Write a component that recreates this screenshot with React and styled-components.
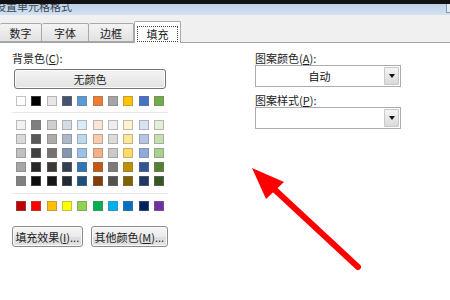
import React from 'react'
import styled, { createGlobalStyle } from 'styled-components'

/* Excel "设置单元格格式" dialog, 填充 tab, with a red pointer arrow on top */

const GlobalStyle = createGlobalStyle`
  html, body {
    margin: 0;
    padding: 0;
    background: #ffffff;
  }
  body {
    font-family: "Noto Sans CJK SC", "Liberation Sans", sans-serif;
    color: #222;
  }
`

const themeRow = ['#FFFFFF', '#000000', '#E7E6E6', '#44546A', '#5B9BD5', '#ED7D31', '#A5A5A5', '#FFC000', '#4472C4', '#70AD47']

const tintRows = [
  ['#F2F2F2', '#7F7F7F', '#D0CECE', '#D6DCE4', '#DDEBF7', '#FCE4D6', '#EDEDED', '#FFF2CC', '#D9E1F2', '#E2EFDA'],
  ['#D9D9D9', '#595959', '#AEABAB', '#ADB9CA', '#BDD7EE', '#F8CBAD', '#DBDBDB', '#FFE699', '#B4C6E7', '#C6E0B4'],
  ['#BFBFBF', '#404040', '#757171', '#8497B0', '#9BC2E6', '#F4B084', '#C9C9C9', '#FFD966', '#8EA9DB', '#A9D08E'],
  ['#A6A6A6', '#262626', '#3B3838', '#333F4F', '#2F75B5', '#C65911', '#7B7B7B', '#BF8F00', '#305496', '#548235'],
  ['#808080', '#0D0D0D', '#171616', '#222B35', '#1F4E78', '#833C0C', '#525252', '#806000', '#203764', '#375623'],
]

const standardRow = ['#C00000', '#FF0000', '#FFC000', '#FFFF00', '#92D050', '#00B050', '#00B0F0', '#0070C0', '#002060', '#7030A0']

const tabs = [
  { label: '数字', width: 42 },
  { label: '字体', width: 47 },
  { label: '边框', width: 45 },
  { label: '填充', width: 47, active: true },
]

const Frame = styled.div`
  position: relative;
  width: 450px;
  height: 300px;
  overflow: hidden;
  background: #ffffff;
  display: flex;
  flex-direction: column;
`

const TopEdge = styled.div`
  height: 4px;
  background: #111111;
`

const TitleBar = styled.div`
  height: 11px;
  overflow: hidden;
  display: flex;
  justify-content: space-between;
  background: linear-gradient(#bcd1e9, #d4e2f1);
`

const TitleText = styled.div`
  font-size: 11px;
  line-height: 11px;
  margin-top: -3px;
  margin-left: -5px;
  color: #3a4450;
  white-space: nowrap;
`

const CloseEdge = styled.div`
  width: 3px;
  height: 8px;
  border-left: 1px solid #8a96a4;
  border-bottom: 1px solid #8a96a4;
  background: #e4ebf3;
`

const TabStrip = styled.div`
  height: 28px;
  box-sizing: border-box;
  display: flex;
  align-items: flex-end;
  background: #f0f0f0;
  border-bottom: 1px solid #a3a3a3;
`

const Tab = styled.div`
  box-sizing: border-box;
  width: ${p => p.$width}px;
  height: ${p => (p.$active ? 22 : 19)}px;
  margin-bottom: ${p => (p.$active ? -1 : 0)}px;
  display: flex;
  align-items: center;
  justify-content: center;
  font-size: 11px;
  color: #222;
  background: ${p => (p.$active ? '#ffffff' : 'linear-gradient(#f4f4f4, #e1e1e1)')};
  border: 1px solid #a8a8a8;
  border-bottom: ${p => (p.$active ? 'none' : '1px solid #a8a8a8')};
  border-left: ${p => (p.$active ? '1px solid #a8a8a8' : 'none')};
  border-radius: 2px 2px 0 0;
  position: relative;
  z-index: ${p => (p.$active ? 1 : 0)};
`

const FocusRing = styled.span`
  display: flex;
  align-items: center;
  justify-content: center;
  width: 39px;
  height: 14px;
  margin-top: 2px;
  border: 1px dotted #444;
`

const Body = styled.div`
  display: flex;
  gap: 87px;
  padding-left: 12px;
`

const LeftPane = styled.div`
  width: 156px;
  display: flex;
  flex-direction: column;
`

const RightPane = styled.div`
  width: 146px;
  display: flex;
  flex-direction: column;
`

const FieldLabel = styled.div`
  font-size: 11px;
  line-height: 14px;
  color: #222;
  margin-top: ${p => p.$top}px;
  white-space: nowrap;
`

const NoColorButton = styled.div`
  box-sizing: border-box;
  width: 152px;
  height: 20px;
  margin: 4px 0 0 2px;
  display: flex;
  align-items: center;
  justify-content: center;
  font-size: 11px;
  color: #222;
  border: 1px solid #767676;
  border-radius: 3px;
  box-shadow: inset 0 0 0 1px #fbfbfb;
  background: linear-gradient(#f4f4f4, #e3e3e3);
`

const SwatchGrid = styled.div`
  display: grid;
  grid-template-columns: repeat(10, 10px);
  column-gap: 5.35px;
  row-gap: 4px;
  margin: ${p => p.$top}px 0 0 4px;
`

const Swatch = styled.div`
  box-sizing: border-box;
  width: 10px;
  height: 10px;
  background: ${p => p.$color};
  border: 1px solid rgba(120, 120, 120, 0.45);
`

const Divider = styled.div`
  height: 1px;
  margin-top: ${p => p.$top}px;
  background: #e8e8e8;
`

const ButtonRow = styled.div`
  display: flex;
  gap: 8px;
  margin-top: 15px;
`

const PushButton = styled.div`
  box-sizing: border-box;
  width: ${p => p.$width}px;
  height: 21px;
  display: flex;
  align-items: center;
  justify-content: center;
  font-size: 11px;
  color: #222;
  white-space: nowrap;
  border: 1px solid #8c8c8c;
  border-radius: 3px;
  box-shadow: inset 0 0 0 1px #fafafa;
  background: linear-gradient(#f6f6f6 0%, #ebebeb 50%, #dcdcdc 51%, #e3e3e3 100%);
`

const Combo = styled.div`
  box-sizing: border-box;
  width: 146px;
  height: 22px;
  display: flex;
  border: 1px solid #abadb3;
  background: #ffffff;
`

const ComboText = styled.div`
  flex: 1;
  display: flex;
  align-items: center;
  justify-content: center;
  font-size: 11px;
  color: #111;
`

const ComboButton = styled.div`
  width: 13px;
  margin: 1px;
  display: flex;
  align-items: center;
  justify-content: center;
  border: 1px solid #c9c9c9;
  border-radius: 1px;
  background: linear-gradient(#f5f5f5, #dadada);
  &::after {
    content: '';
    width: 0;
    height: 0;
    border-left: 3px solid transparent;
    border-right: 3px solid transparent;
    border-top: 4px solid #111;
  }
`

const Overlay = styled.svg`
  position: absolute;
  left: 0;
  top: 0;
  width: 450px;
  height: 300px;
  pointer-events: none;
`

const SwatchBlock = ({ rows, top }) => (
  <SwatchGrid $top={top}>
    {rows.flat().map((c, i) => (
      <Swatch key={i} $color={c} />
    ))}
  </SwatchGrid>
)

const App = () => (
  <Frame>
    <GlobalStyle />
    <TopEdge />
    <TitleBar>
      <TitleText>设置单元格格式</TitleText>
      <CloseEdge />
    </TitleBar>
    <TabStrip>
      {tabs.map(t => (
        <Tab key={t.label} $width={t.width} $active={t.active}>
          {t.active ? <FocusRing>{t.label}</FocusRing> : t.label}
        </Tab>
      ))}
    </TabStrip>
    <Body>
      <LeftPane>
        <FieldLabel $top={8}>
          背景色(<u>C</u>):
        </FieldLabel>
        <NoColorButton>无颜色</NoColorButton>
        <SwatchBlock rows={[themeRow]} top={7} />
        <Divider $top={6} />
        <SwatchBlock rows={tintRows} top={7} />
        <Divider $top={7} />
        <SwatchBlock rows={[standardRow]} top={7} />
        <ButtonRow>
          <PushButton $width={73}>
            填充效果(<u>I</u>)...
          </PushButton>
          <PushButton $width={80}>
            其他颜色(<u>M</u>)...
          </PushButton>
        </ButtonRow>
      </LeftPane>
      <RightPane>
        <FieldLabel $top={8}>
          图案颜色(<u>A</u>):
        </FieldLabel>
        <Combo>
          <ComboText>自动</ComboText>
          <ComboButton />
        </Combo>
        <FieldLabel $top={6}>
          图案样式(<u>P</u>):
        </FieldLabel>
        <Combo>
          <ComboText />
          <ComboButton />
        </Combo>
      </RightPane>
    </Body>
    <Overlay viewBox="0 0 450 300">
      <line x1="358" y1="267" x2="274" y2="189" stroke="#ff0000" strokeWidth="6" strokeLinecap="round" />
      <polygon points="252,168 284,182 266,199" fill="#ff0000" />
    </Overlay>
  </Frame>
)

export default App
